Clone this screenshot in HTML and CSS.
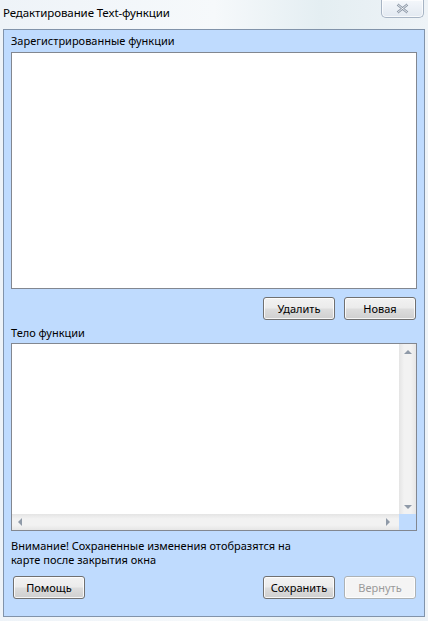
FILE: index.html
```html
<!DOCTYPE html>
<html lang="ru">
<head>
    <meta charset="UTF-8">
    <title>Редактирование Text-функции</title>
    <link rel="stylesheet" href="styles.css">
</head>
<body>
    <div class="window">
        <div class="titlebar">
            <span class="title">Редактирование Text-функции</span>
            <button class="close-btn" aria-label="Закрыть">
                <svg width="13" height="11" viewBox="0 0 13 11">
                    <path d="M1.5 1.5 L11.5 9.5 M11.5 1.5 L1.5 9.5" stroke="#8a96a6" stroke-width="2.4" fill="none"/>
                    <path d="M1.5 1.5 L11.5 9.5 M11.5 1.5 L1.5 9.5" stroke="#fff" stroke-width="0.8" fill="none"/>
                </svg>
            </button>
        </div>

        <div class="panel">
            <label class="caption">Зарегистрированные функции</label>
            <div class="listbox"></div>

            <div class="row right">
                <button class="btn">Удалить</button>
                <button class="btn">Новая</button>
            </div>

            <label class="caption body-caption">Тело функции</label>
            <div class="editor">
                <div class="editor-main">
                    <div class="editor-text"></div>
                    <div class="vscroll">
                        <span class="arrow up"></span>
                        <span class="arrow down"></span>
                    </div>
                </div>
                <div class="hscroll-row">
                    <div class="hscroll">
                        <span class="arrow left"></span>
                        <span class="arrow right-a"></span>
                    </div>
                    <div class="corner"></div>
                </div>
            </div>

            <p class="notice">Внимание! Сохраненные изменения отобразятся на<br>карте после закрытия окна</p>

            <div class="row bottom">
                <button class="btn">Помощь</button>
                <div class="spacer"></div>
                <button class="btn">Сохранить</button>
                <button class="btn" disabled>Вернуть</button>
            </div>
        </div>
    </div>
</body>
</html>
```

FILE: styles.css
```css
* {
    margin: 0;
    padding: 0;
    box-sizing: border-box;
    font-family: 'Noto Sans', 'Open Sans', sans-serif;
}

body {
    width: 428px;
    height: 621px;
    overflow: hidden;
    background: linear-gradient(90deg, #eef3f8 0%, #f6f9fb 50%, #e4eef2 75%, #eef3f7 100%);
}

.window {
    display: flex;
    flex-direction: column;
    height: 100%;
    padding: 0 3px 4px 3px;
}

.titlebar {
    display: flex;
    justify-content: space-between;
    align-items: flex-start;
    height: 29px;
}

.title {
    font-size: 11.5px;
    color: #000;
    margin-top: 5px;
    letter-spacing: -0.1px;
}

.close-btn {
    width: 43px;
    height: 18px;
    margin-right: 1px;
    border: 1px solid #a7b4c4;
    border-top: none;
    border-radius: 0 0 5px 5px;
    background: linear-gradient(#f4f7fb, #e2e9f1);
    display: flex;
    align-items: center;
    justify-content: center;
    box-shadow: inset 0 0 0 1px rgba(255, 255, 255, 0.7);
}

.panel {
    flex: 1;
    display: flex;
    flex-direction: column;
    background-color: #bfdbfe;
    border: 1px solid #8193aa;
    padding: 4px 7px 0 7px;
}

.caption {
    font-size: 11px;
    color: #000;
    line-height: 14px;
    height: 18px;
}

.listbox {
    height: 237px;
    background: #fff;
    border: 1px solid #828790;
}

.row {
    display: flex;
    gap: 9px;
}

.right {
    justify-content: flex-end;
    padding: 8px 1px 0 0;
    height: 37px;
}

.btn {
    width: 72px;
    height: 23px;
    font-size: 11px;
    font-weight: normal;
    color: #000;
    border: 1px solid #707070;
    border-radius: 3px;
    background: linear-gradient(#f2f2f2 0%, #ebebeb 48%, #dddddd 52%, #cfcfcf 100%);
    box-shadow: inset 0 0 0 1px rgba(255, 255, 255, 0.8);
}

.btn:disabled {
    color: #9a9a9a;
    border-color: #adb2b5;
    background: #f4f4f4;
}

.body-caption {
    height: 17px;
}

.editor {
    height: 188px;
    display: flex;
    flex-direction: column;
    border: 1px solid #828790;
    background: #fff;
}

.editor-main {
    flex: 1;
    display: flex;
}

.editor-text {
    flex: 1;
}

.vscroll {
    width: 17px;
    background: linear-gradient(90deg, #e4e4e4, #f2f2f2 30%, #f2f2f2 70%, #e6e6e6);
    display: flex;
    flex-direction: column;
    justify-content: space-between;
    align-items: center;
    padding: 6px 0 5px 0;
}

.hscroll-row {
    height: 16px;
    display: flex;
}

.hscroll {
    flex: 1;
    background: linear-gradient(#e4e4e4, #f2f2f2 30%, #f2f2f2 70%, #e6e6e6);
    display: flex;
    justify-content: space-between;
    align-items: center;
    padding: 0 9px 0 6px;
}

.corner {
    width: 17px;
    background: #bfdbfe;
}

.arrow {
    width: 0;
    height: 0;
    border: 4px solid transparent;
}

.up {
    border-bottom-color: #8f9aa8;
    border-top-width: 0;
}

.down {
    border-top-color: #8f9aa8;
    border-bottom-width: 0;
}

.left {
    border-right-color: #8f9aa8;
    border-left-width: 0;
}

.right-a {
    border-left-color: #8f9aa8;
    border-right-width: 0;
}

.notice {
    font-size: 11px;
    line-height: 14px;
    color: #000;
    margin-top: 8px;
    height: 37px;
}

.bottom {
    padding: 0 1px 0 2px;
}

.spacer {
    flex: 1;
}
```
